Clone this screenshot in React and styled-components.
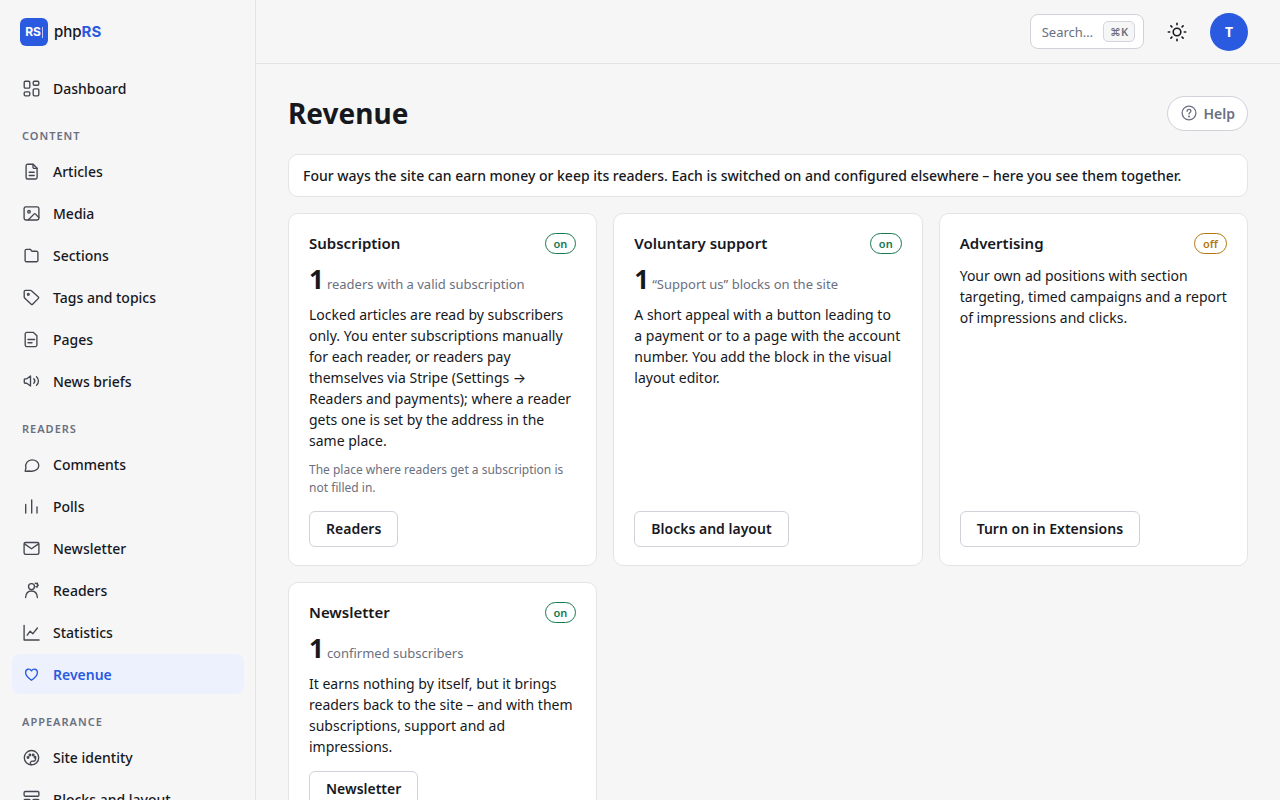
import React from 'react';
import styled, { createGlobalStyle } from 'styled-components';

const GlobalStyle = createGlobalStyle`
  *, *::before, *::after { box-sizing: border-box; }
  body {
    margin: 0;
    background: #f6f6f7;
    color: #16181d;
    font: 400 14px/21px "Noto Sans", Inter, sans-serif;
  }
  h1, h2, p, ul { margin: 0; padding: 0; }
  ul { list-style: none; }
  a { color: inherit; text-decoration: none; }
  button { font: inherit; color: inherit; cursor: pointer; }
`;

const Shell = styled.div`
  display: grid;
  grid-template-columns: 256px minmax(0, 1fr);
  height: 100vh;
  overflow: hidden;
`;

const Sidebar = styled.aside`
  border-right: 1px solid #e2e4e8;
  padding: 0 11px 0 12px;
  overflow: hidden;
`;

const Brand = styled.a`
  display: flex;
  align-items: center;
  gap: 6px;
  height: 64px;
  padding-left: 8px;
  margin-bottom: 4px;
  font: 500 15px/20px Inter, sans-serif;
  color: #16181d;
`;

const BrandMark = styled.span`
  display: flex;
  align-items: center;
  justify-content: center;
  width: 28px;
  height: 28px;
  border-radius: 6px;
  background: #2a5ae0;
  color: #fff;
  font-size: 12px;
  font-weight: 700;
`;

const Caret = styled.span`
  width: 1px;
  height: 11px;
  margin-left: 1px;
  background: #b9cbf8;
`;

const Accent = styled.span`
  font-weight: 700;
  color: #2a5ae0;
`;

const NavHeading = styled.h2`
  margin: 20px 10px 7px;
  font-size: 11px;
  line-height: 16px;
  font-weight: 600;
  letter-spacing: 1px;
  text-transform: uppercase;
  color: #6b7080;
`;

const NavList = styled.ul`
  display: flex;
  flex-direction: column;
  gap: 2px;
`;

const NavLink = styled.a`
  display: flex;
  align-items: center;
  gap: 12px;
  height: 40px;
  padding: 0 10px;
  border-radius: 8px;
  font-weight: ${(p) => (p.$active ? 600 : 500)};
  background: ${(p) => (p.$active ? '#edf1fe' : 'transparent')};
  color: ${(p) => (p.$active ? '#2a5ae0' : '#16181d')};
`;

const NavIcon = styled.svg`
  flex: none;
  width: 19px;
  height: 19px;
  fill: none;
  stroke: ${(p) => (p.$active ? '#2a5ae0' : '#44474f')};
  stroke-width: 1.35;
  stroke-linecap: round;
  stroke-linejoin: round;
`;

const Page = styled.div`
  display: flex;
  flex-direction: column;
  min-width: 0;
  overflow: hidden;
`;

const TopBar = styled.header`
  flex: none;
  display: flex;
  align-items: center;
  justify-content: flex-end;
  height: 64px;
  padding: 0 32px;
  border-bottom: 1px solid #e2e4e8;
`;

const SearchButton = styled.button`
  display: flex;
  align-items: center;
  gap: 10px;
  height: 35px;
  padding: 0 8px 0 11px;
  border: 1px solid #cfd2d8;
  border-radius: 8px;
  background: #fff;
  font-size: 13px;
  line-height: 20px;
  color: #6b7080;
`;

const Shortcut = styled.kbd`
  height: 21px;
  padding: 0 6px;
  border: 1px solid #d3d6dc;
  border-radius: 5px;
  background: #f6f6f7;
  font: 600 11px/19px "Noto Sans", Inter, sans-serif;
`;

const ThemeButton = styled.button`
  display: flex;
  align-items: center;
  justify-content: center;
  width: 36px;
  height: 36px;
  margin: 0 15px;
  padding: 0;
  border: 0;
  background: none;
`;

const Avatar = styled.button`
  width: 38px;
  height: 38px;
  padding: 0;
  border: 0;
  border-radius: 50%;
  background: #2a5ae0;
  color: #fff;
  font-size: 14px;
  font-weight: 700;
`;

const Main = styled.main`
  padding: 32px;
`;

const TitleRow = styled.div`
  display: flex;
  align-items: center;
  justify-content: space-between;
  margin-bottom: 23px;
`;

const Title = styled.h1`
  font-size: 28px;
  line-height: 35px;
  font-weight: 700;
`;

const HelpButton = styled.button`
  display: flex;
  align-items: center;
  gap: 6px;
  height: 35px;
  padding: 0 12px 0 13px;
  border: 1px solid #cfd2d8;
  border-radius: 18px;
  background: #fff;
  font-weight: 600;
  color: #6b7080;
`;

const Notice = styled.p`
  padding: 10px 14px;
  margin-bottom: 16px;
  border: 1px solid #e2e4e8;
  border-radius: 10px;
  background: #fff;
  font-weight: 500;
`;

const CardGrid = styled.div`
  display: grid;
  grid-template-columns: repeat(3, minmax(0, 1fr));
  gap: 16px;
`;

const Card = styled.section`
  display: flex;
  flex-direction: column;
  align-items: flex-start;
  padding: 18px 20px;
  border: 1px solid #e2e4e8;
  border-radius: 10px;
  background: #fff;
`;

const CardHeader = styled.div`
  display: flex;
  align-items: center;
  justify-content: space-between;
  align-self: stretch;
  height: 23px;
  margin-bottom: 10px;
`;

const CardTitle = styled.h2`
  font-size: 15px;
  line-height: 23px;
  font-weight: 600;
`;

const Status = styled.span`
  height: 21px;
  padding: 0 8px;
  border: 1px solid currentColor;
  border-radius: 11px;
  font-size: 11px;
  line-height: 19px;
  font-weight: 600;
  color: ${(p) => (p.$on ? '#15794f' : '#b3760c')};
`;

const Stat = styled.p`
  display: flex;
  align-items: baseline;
  gap: 3px;
  margin-bottom: 10px;
  font-size: 13px;
  line-height: 18px;
  color: #6b7080;
`;

const StatNumber = styled.strong`
  font-size: 26px;
  line-height: 29px;
  font-weight: 700;
  color: #16181d;
`;

const Note = styled.p`
  margin-top: 10px;
  font-size: 12px;
  line-height: 18px;
  color: #6b7080;
`;

const CardAction = styled.div`
  margin-top: auto;
  padding-top: 14px;
`;

const ActionLink = styled.a`
  display: block;
  padding: 7px 16px;
  border: 1px solid #cfd2d8;
  border-radius: 6px;
  background: #fff;
  font-weight: 600;
  line-height: 20px;
`;

const icons = {
  dashboard: (
    <>
      <rect x="2.2" y="2.2" width="5.6" height="6.9" rx="1.2" />
      <rect x="11.2" y="2.2" width="5.6" height="4" rx="1.2" />
      <rect x="2.2" y="12.8" width="5.6" height="4" rx="1.2" />
      <rect x="11.2" y="9.9" width="5.6" height="6.9" rx="1.2" />
    </>
  ),
  articles: (
    <>
      <path d="M11.2 2.2H5.6A1.5 1.5 0 0 0 4.1 3.7v11.8A1.5 1.5 0 0 0 5.6 17h8a1.5 1.5 0 0 0 1.5-1.5V6.2z" />
      <path d="M11 2.4v2.8a1.2 1.2 0 0 0 1.2 1.2H15M7.2 10.2h5M7.2 13.5h5" />
    </>
  ),
  media: (
    <>
      <rect x="2.1" y="2.8" width="14.8" height="13.2" rx="1.8" />
      <circle cx="7" cy="7.8" r="1.3" />
      <path d="M6.4 15.8l5.8-5.9a.9.9 0 0 1 1.2 0l3.4 3.7" />
    </>
  ),
  sections: <path d="M3.1 4.7a1.4 1.4 0 0 1 1.4-1.4h3.2a1.4 1.4 0 0 1 1.1.5l1 1.4h4.7A1.4 1.4 0 0 1 15.9 6.6v7.8a1.4 1.4 0 0 1-1.4 1.4h-10a1.4 1.4 0 0 1-1.4-1.4z" />,
  tags: (
    <>
      <path d="M2.2 3.6a1.3 1.3 0 0 1 1.3-1.3h5a1.3 1.3 0 0 1 .9.4l7 6.3a1 1 0 0 1 0 1.4l-5.8 5.9a1 1 0 0 1-1.4 0L2.6 9.9a1.3 1.3 0 0 1-.4-.9z" />
      <circle cx="6.3" cy="6.3" r=".9" />
    </>
  ),
  pages: (
    <>
      <path d="M4.8 2.4h6.6l3.5 3.4v9.2a1.6 1.6 0 0 1-1.6 1.6H4.8A1.6 1.6 0 0 1 3.2 15V4a1.6 1.6 0 0 1 1.6-1.6z" />
      <path d="M6 9.5h6.6M6 12.7h4" />
    </>
  ),
  news: (
    <>
      <path d="M2.3 7.6a.8.8 0 0 1 .8-.8h1.7l3.7-2.8v10l-3.700-2.800H3.100a.8.8 0 0 1-.8-.8z" />
      <path d="M11.800 6.800c1.200 1.300 1.200 3.200 0 4.500M14.500 4.800c2.600 2.400 2.600 6.100 0 8.500" />
    </>
  ),
  comments: <path d="M3.2 16.300l.7-3.600C2.900 8.300 5.900 4.900 10 4.900c3.900 0 6.800 2.500 6.800 5.600 0 3.200-2.900 5.700-6.800 5.700-1.100 0-2.200 0-3.100-.2z" />,
  polls: <path d="M3.700 7.500v8.500M9.700 3v13M15 10v6" />,
  mail: (
    <>
      <rect x="2.100" y="3.500" width="14.800" height="11.800" rx="1.500" />
      <path d="M2.500 4.900l7 4.900 7-4.900" />
    </>
  ),
  readers: (
    <>
      <circle cx="9.500" cy="5.600" r="3" />
      <path d="M3.600 16.500c.3-4 2.600-6.500 5.900-6.500s5.600 2.500 5.900 6.500" />
      <path d="M13.200 2.200l1.200.4 1-.5v1.300l.9.8-1 .7-.2 1.300-1.200-.5" />
    </>
  ),
  statistics: <path d="M2.100 2.300V17h15M5.200 12.200l3-4 2.700 2.500 4.500-5.700" />,
  revenue: <path d="M9.500 15.200C6.200 13 3.600 11 3.600 7.600c0-4 4.300-4.300 5.900-1.700 1.600-2.600 5.900-2.300 5.900 1.700 0 3.400-2.600 5.400-5.900 7.600z" />,
  identity: (
    <>
      <circle cx="9.500" cy="9.700" r="7.200" />
      <path d="M9.200 16.800c-2-1.900-.2-3.700 1.400-3.600 2.400.2 3.200-1.200 3-3" />
      <circle cx="6" cy="9.500" r=".8" />
      <circle cx="7.900" cy="6.900" r=".8" />
      <circle cx="11.200" cy="6.900" r=".8" />
      <circle cx="13" cy="9.300" r=".8" />
    </>
  ),
  blocks: (
    <>
      <rect x="2.100" y="1.500" width="14.800" height="4.700" rx="1.200" />
      <rect x="2.100" y="9.300" width="6" height="7.300" rx="1.200" />
      <rect x="10.900" y="9.300" width="6" height="7.300" rx="1.200" />
    </>
  ),
};

const navGroups = [
  { items: [['dashboard', 'Dashboard']] },
  {
    heading: 'Content',
    items: [
      ['articles', 'Articles'],
      ['media', 'Media'],
      ['sections', 'Sections'],
      ['tags', 'Tags and topics'],
      ['pages', 'Pages'],
      ['news', 'News briefs'],
    ],
  },
  {
    heading: 'Readers',
    items: [
      ['comments', 'Comments'],
      ['polls', 'Polls'],
      ['mail', 'Newsletter'],
      ['readers', 'Readers'],
      ['statistics', 'Statistics'],
      ['revenue', 'Revenue'],
    ],
  },
  {
    heading: 'Appearance',
    items: [
      ['identity', 'Site identity'],
      ['blocks', 'Blocks and layout'],
    ],
  },
];

const cards = [
  {
    title: 'Subscription',
    on: true,
    count: 1,
    unit: 'readers with a valid subscription',
    text: 'Locked articles are read by subscribers only. You enter subscriptions manually for each reader, or readers pay themselves via Stripe (Settings → Readers and payments); where a reader gets one is set by the address in the same place.',
    note: 'The place where readers get a subscription is not filled in.',
    action: 'Readers',
  },
  {
    title: 'Voluntary support',
    on: true,
    count: 1,
    unit: '“Support us” blocks on the site',
    text: 'A short appeal with a button leading to a\u00a0payment or to a page with the account number. You add the block in the visual layout editor.',
    action: 'Blocks and layout',
  },
  {
    title: 'Advertising',
    on: false,
    text: 'Your own ad positions with section targeting, timed campaigns and a report of impressions and clicks.',
    action: 'Turn on in Extensions',
  },
  {
    title: 'Newsletter',
    on: true,
    count: 1,
    unit: 'confirmed subscribers',
    text: 'It earns nothing by itself, but it brings readers back to the site – and with them subscriptions, support and ad impressions.',
    action: 'Newsletter',
  },
];

function SunIcon() {
  return (
    <svg width="20" height="20" viewBox="0 0 20 20" fill="none" stroke="#16181d" strokeWidth="1.6" strokeLinecap="round" aria-hidden="true">
      <circle cx="10" cy="10" r="3.8" />
      <path d="M10 1.300v1.400M10 17.300v1.400M1.300 10h1.400M17.300 10h1.400M3.900 3.900l1 1M15.100 15.100l1 1M3.900 16.100l1-1M15.100 4.900l1-1" />
    </svg>
  );
}

function HelpIcon() {
  return (
    <svg width="17" height="17" viewBox="0 0 17 17" fill="none" stroke="#6b7080" strokeWidth="1.3" strokeLinecap="round" aria-hidden="true">
      <circle cx="8" cy="8" r="6.900" />
      <path d="M6.100 6.300c0-1.300.9-2 1.900-2s1.900.7 1.900 1.800c0 1.300-1.900 1.500-1.900 2.900" />
      <circle cx="8" cy="11.500" r=".4" fill="#6b7080" />
    </svg>
  );
}

export default function App() {
  return (
    <>
      <GlobalStyle />
      <Shell>
        <Sidebar>
          <Brand href="#">
            <BrandMark>RS<Caret /></BrandMark>
            <span>php<Accent>RS</Accent></span>
          </Brand>
          <nav>
            {navGroups.map((group) => (
              <React.Fragment key={group.heading || 'top'}>
                {group.heading && <NavHeading>{group.heading}</NavHeading>}
                <NavList>
                  {group.items.map(([icon, label]) => {
                    const active = icon === 'revenue';
                    return (
                      <li key={icon}>
                        <NavLink href="#" $active={active} aria-current={active ? 'page' : undefined}>
                          <NavIcon viewBox="0 0 19 19" $active={active} aria-hidden="true">{icons[icon]}</NavIcon>
                          {label}
                        </NavLink>
                      </li>
                    );
                  })}
                </NavList>
              </React.Fragment>
            ))}
          </nav>
        </Sidebar>
        <Page>
          <TopBar>
            <SearchButton type="button">
              Search…
              <Shortcut>⌘K</Shortcut>
            </SearchButton>
            <ThemeButton type="button" aria-label="Switch theme"><SunIcon /></ThemeButton>
            <Avatar type="button">T</Avatar>
          </TopBar>
          <Main>
            <TitleRow>
              <Title>Revenue</Title>
              <HelpButton type="button"><HelpIcon />Help</HelpButton>
            </TitleRow>
            <Notice>Four ways the site can earn money or keep its readers. Each is switched on and configured elsewhere – here you see them together.</Notice>
            <CardGrid>
              {cards.map((card) => (
                <Card key={card.title}>
                  <CardHeader>
                    <CardTitle>{card.title}</CardTitle>
                    <Status $on={card.on}>{card.on ? 'on' : 'off'}</Status>
                  </CardHeader>
                  {card.unit && <Stat><StatNumber>{card.count}</StatNumber> {card.unit}</Stat>}
                  <p>{card.text}</p>
                  {card.note && <Note>{card.note}</Note>}
                  <CardAction><ActionLink href="#">{card.action}</ActionLink></CardAction>
                </Card>
              ))}
            </CardGrid>
          </Main>
        </Page>
      </Shell>
    </>
  );
}
